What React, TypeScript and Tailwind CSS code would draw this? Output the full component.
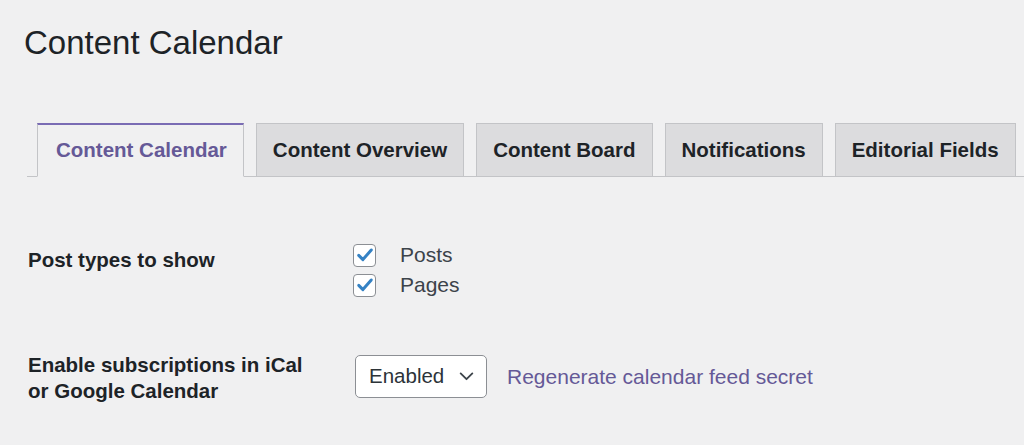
const tabs = [
  "Content Calendar",
  "Content Overview",
  "Content Board",
  "Notifications",
  "Editorial Fields",
];

const CheckIcon = () => (
  <svg viewBox="0 0 24 24" className="w-[20px] h-[20px]" fill="none">
    <path
      d="M4.5 12.5 L9.5 17.5 L19.5 6"
      stroke="#3582c4"
      strokeWidth="3.6"
      strokeLinecap="round"
      strokeLinejoin="round"
    />
  </svg>
);

const Checkbox = ({ label }: { label: string }) => (
  <label className="flex items-center h-[30px]">
    <span className="w-[23px] h-[23px] bg-white border border-[#8c8f94] rounded-[4px] flex items-center justify-center">
      <CheckIcon />
    </span>
    <span className="ml-[24px] text-[21px] text-[#3c434a] leading-[30px]">{label}</span>
  </label>
);

export default function App() {
  return (
    <div className="min-h-screen bg-[#f0f0f1] text-[#1d2327] font-['Liberation_Sans',Arial,sans-serif]">
      {/* Page title */}
      <h1 className="pl-[24px] pt-[23px] text-[33px] leading-[40px] font-normal">
        Content Calendar
      </h1>

      {/* Tabs */}
      <nav className="ml-[27px] mt-[60px] flex items-end border-b border-[#c3c4c7]">
        {tabs.map((tab, i) => (
          <a
            key={tab}
            href="#"
            className={
              i === 0
                ? "-mb-px ml-[10px] shrink-0 whitespace-nowrap h-[54px] pl-[18px] pr-[16px] flex items-center border border-[#c3c4c7] border-t-[2px] border-t-[#7a6cb4] border-b-[#f0f0f1] bg-[#f0f0f1] text-[20.5px] font-bold text-[#655997]"
                : "-mb-px ml-[12px] shrink-0 whitespace-nowrap h-[54px] px-[16px] flex items-center border border-[#c3c4c7] bg-[#dcdcde] text-[20.5px] font-bold text-[#1d2327]"
            }
          >
            {tab}
          </a>
        ))}
      </nav>

      {/* Settings */}
      <div className="pl-[28px]">
        <div className="flex mt-[63px]">
          <div className="w-[325px] mt-[6px] text-[20.5px] leading-[27px] font-bold">
            Post types to show
          </div>
          <div className="flex flex-col">
            <Checkbox label="Posts" />
            <Checkbox label="Pages" />
          </div>
        </div>

        <div className="flex items-start mt-[52px]">
          <div className="w-[327px] text-[20.5px] leading-[26px] font-bold">
            Enable subscriptions in iCal
            <br />
            or Google Calendar
          </div>
          <div className="flex items-center mt-[3px]">
            <div className="w-[132px] h-[43px] bg-white border border-[#8c8f94] rounded-[5px] flex items-center justify-between pl-[13px] pr-[12px] text-[20.5px] text-[#2c3338]">
              <span>Enabled</span>
              <svg viewBox="0 0 16 10" className="w-[15px] h-[9px]" fill="none">
                <path
                  d="M1.5 1.5 L8 8 L14.5 1.5"
                  stroke="#3c434a"
                  strokeWidth="2"
                  strokeLinecap="round"
                  strokeLinejoin="round"
                />
              </svg>
            </div>
            <a href="#" className="ml-[20px] text-[21px] text-[#655997]">
              Regenerate calendar feed secret
            </a>
          </div>
        </div>
      </div>
    </div>
  );
}
